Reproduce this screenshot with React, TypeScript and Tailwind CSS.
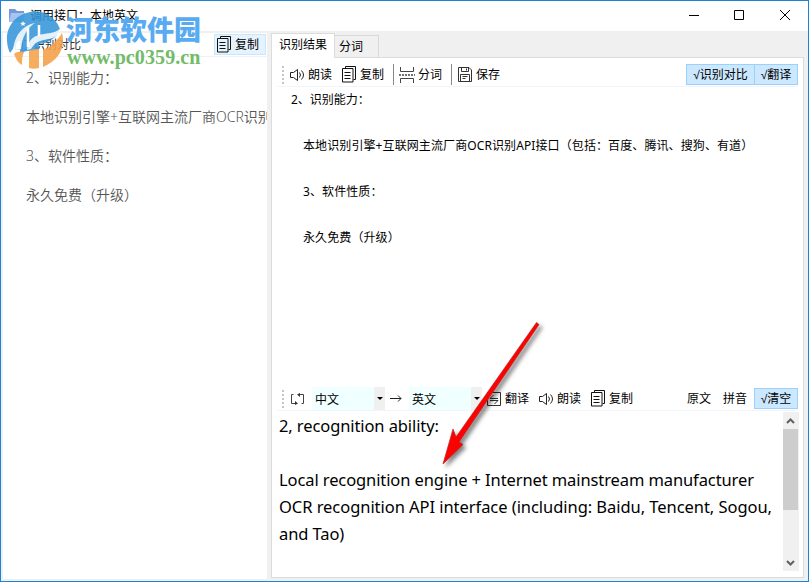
import type { ReactNode } from 'react'

const ui = "font-['Noto_Sans','Noto_Sans_CJK_SC',sans-serif]"

const sourceLines = ['2、识别能力：', '本地识别引擎+互联网主流厂商OCR识别API接口', '3、软件性质：', '永久免费（升级）']

const resultLines = [
  '本地识别引擎+互联网主流厂商OCR识别API接口（包括：百度、腾讯、搜狗、有道）',
  '3、软件性质：',
  '永久免费（升级）',
]

function CopyIcon() {
  return (
    <svg className="w-[15px] h-[17px] shrink-0" viewBox="0 0 15 17" fill="none" stroke="#111">
      <path d="M3.500 2.500V.5h10v13h-2M.5 2.500h10.500v13.500H.5zM2.500 6.500h6M2.500 9.500h6M2.500 12.500h6" />
    </svg>
  )
}

function SpeakerIcon() {
  return (
    <svg className="w-[15px] h-[14px] shrink-0" viewBox="0 0 15 14" fill="none" stroke="#222">
      <path d="M3.500 4.500h-3v5h3l4 3v-11zM9.500 4.500q2 2.500 0 5M11.500 2.500q4 4.500 0 9" />
    </svg>
  )
}

function SplitIcon() {
  return (
    <svg className="w-4 h-4 shrink-0" viewBox="0 0 16 16" fill="none" stroke="#444">
      <path d="M1.500 0v4.500h13V0M1.500 16v-4.500h13V16" />
      <path d="M0 8h16" strokeDasharray="2 1" strokeWidth="1.500" />
    </svg>
  )
}

function SaveIcon() {
  return (
    <svg className="w-[14px] h-[15px] shrink-0" viewBox="0 0 14 15" fill="none" stroke="#333">
      <path d="M.5.5h10.500l2.500 2.500v11.500H.5zM3.500.5v4h7v-4M8.500 1.500v2M2.500 14.500v-7h9v7M4.500 9.500h5M4.500 11.500h3" />
    </svg>
  )
}

function SwapIcon() {
  return (
    <svg className="w-[15px] h-3 shrink-0" viewBox="0 0 15 12" fill="none" stroke="#444">
      <path d="M3.500 1.500h-2v9h4M11.500 10.500h2v-9h-4" />
      <path d="M5 8v4l3-1.500zM10 0v4L7 1.500z" fill="#333" stroke="none" />
    </svg>
  )
}

function TranslateIcon() {
  return (
    <svg className="w-[14px] h-[14px] shrink-0" viewBox="0 0 14 14" fill="none" stroke="#333">
      <path d="M.5.5h13v13H.5zM3 6.500h8M6.500 3L3 6.500M3 8.500h8L7.500 12" />
    </svg>
  )
}

function Grip() {
  return (
    <div className="flex flex-col gap-[2px] w-[2px] shrink-0">
      {[0, 1, 2, 3, 4].map((i) => (
        <i key={i} className="block w-[2px] h-[2px] bg-[#c4c4c4]" />
      ))}
    </div>
  )
}

function Tool({ icon, label, className = '' }: { icon: ReactNode; label: string; className?: string }) {
  return (
    <button className={`flex items-center gap-1 shrink-0 whitespace-nowrap ${className}`}>
      {icon}
      <span>{label}</span>
    </button>
  )
}

function Toggle({ label, className }: { label: string; className: string }) {
  return (
    <button
      className={`h-[21px] leading-[20px] bg-[#cce8ff] border border-[#99d1ff] whitespace-nowrap font-['Liberation_Sans','Noto_Sans_CJK_SC',sans-serif] ${className}`}
    >
      √{label}
    </button>
  )
}

function LangSelect({ label }: { label: string }) {
  return (
    <div className="flex w-[73px] h-[23px] shrink-0 bg-[#f0ffff] leading-[25px]">
      <span className="flex-1 pl-[3px]">{label}</span>
      <span className="w-[11px] bg-[#f0f0f0] flex items-center justify-center">
        <i className="block border-x-[3px] border-x-transparent border-t-[3px] border-t-black" />
      </span>
    </div>
  )
}

function Watermark() {
  return (
    <div className="absolute left-[4px] top-[9px] w-[200px] h-[60px]">
      <svg className="absolute left-0 top-0 w-[60px] h-[60px]" viewBox="0 0 60 60">
        {/* upper blue half */}
        <path
          d="M5 43C-3 25 5 6 25 2c13-2 25 4 30 17-4 10-12 14-21 15v6l-12 1-7 2V29c-4 4-6 9-10 14z"
          fill="#3596d9"
          fillOpacity=".88"
        />
        {/* lower orange half */}
        <path d="M57 23c4 15-4 28-19 34V40c8-3 14-9 19-17z" fill="#f5a14a" fillOpacity=".9" />
        <path d="M24 41c4-2 7-2 10-2v19c-4 1-7 1-10 0zM9 44c3-3 7-3 10-2-2 4-2 9-2 13-4-2-6-6-8-11z" fill="#f5a44c" fillOpacity=".9" />
        {/* white swoosh and stems over both halves */}
        <path d="M8 44C8 26 18 15 30 13c-8 5-13 14-14 26-3 1-5 3-8 5z" fill="#fff" fillOpacity=".85" />
        <path d="M23 18v19M34 15v11" stroke="#fff" strokeWidth="2.500" />
        <path d="M22 40c1-11 8-15 17-16 7-1 13-2 17-6-3 10-11 11-17 12-7 1-10 4-13 9z" fill="#fff" fillOpacity=".85" />
        <path d="M18 11l.8 1.700 1.900.2-1.400 1.300.4 1.900-1.700-1-1.700 1 .4-1.900-1.400-1.300 1.900-.2z" fill="#fff" />
      </svg>
      <div className="absolute left-[61px] top-[2px] whitespace-nowrap font-['Noto_Sans_CJK_SC',sans-serif] font-black text-[27px] leading-[34px] text-[#58abf0]">
        河东软件园
      </div>
      <div className="absolute left-[62px] top-[36px] whitespace-nowrap font-['Liberation_Serif',serif] font-bold text-[20px] leading-[22px] tracking-[0.100px] text-[#73bb68]">
        www.pc0359.cn
      </div>
    </div>
  )
}

function RedArrow() {
  return (
    <svg className="absolute left-[429px] top-[309px] w-[130px] h-[170px] pointer-events-none" viewBox="0 0 130 170">
      <path
        className="drop-shadow-[3px_3px_2px_rgba(0,0,0,0.5)]"
        d="M106.500 12.500l2.500 2L29 132l4 2.500L13 154l10-35 3 8z"
        fill="#f00"
        stroke="#b22"
        strokeWidth=".7"
      />
    </svg>
  )
}

function SourcePanel() {
  return (
    <section className="w-[264px] mt-[2px] mb-[2px] shrink-0 bg-white flex flex-col overflow-hidden">
      <div className="h-6 shrink-0 flex items-center border-b border-[#f0f0f8]">
        <Tool
          className="ml-3 text-[#333]"
          icon={
            <svg className="w-[14px] h-[12px]" viewBox="0 0 14 12" fill="none" stroke="#888">
              <path d="M5 1.500H.5v9H5M9 1.500h4.500v9H9M7.500 0v12" />
            </svg>
          }
          label="识别对比"
        />
        <button className="ml-auto mr-[1px] w-[52px] h-[21px] flex items-center border border-[#c9e6fb] bg-[#e5f3ff] pl-[2px] gap-[3px]">
          <CopyIcon />
          <span>复制</span>
        </button>
      </div>
      <div className="pl-[23px] pt-[1px] text-[14px] leading-[39px] text-[#555] whitespace-nowrap font-[350]">
        {sourceLines.map((line) => (
          <p key={line}>{line}</p>
        ))}
      </div>
    </section>
  )
}

function ResultToolbar() {
  return (
    <div className="h-[29px] mx-[5px] pt-[5px] border-b border-[#f3f3fa] flex items-center">
      <div className="ml-[5px]"><Grip /></div>
      <Tool className="ml-[6px] !gap-[3px]" icon={<SpeakerIcon />} label="朗读" />
      <Tool className="ml-[10px] !gap-[3px]" icon={<CopyIcon />} label="复制" />
      <i className="ml-[9px] w-px h-[21px] bg-[#888]" />
      <Tool className="ml-[5px] !gap-[3px]" icon={<SplitIcon />} label="分词" />
      <i className="ml-[9px] w-px h-[21px] bg-[#888]" />
      <Tool className="ml-[6px]" icon={<SaveIcon />} label="保存" />
      <div className="ml-auto flex">
        <Toggle label="识别对比" className="w-[69px]" />
        <Toggle label="翻译" className="-ml-px w-[44px]" />
      </div>
    </div>
  )
}

function TranslateToolbar() {
  return (
    <div className="h-[24px] mx-[5px] border-b border-[#f3f3fa] flex items-center">
      <div className="ml-[5px]"><Grip /></div>
      <div className="ml-[6px] mr-[7px]"><SwapIcon /></div>
      <LangSelect label="中文" />
      <svg className="w-3 h-[7px] ml-[5px] mr-[7px] shrink-0" viewBox="0 0 12 7" fill="none" stroke="#222">
        <path d="M0 3.500h11M8 .5l3 3-3 3" />
      </svg>
      <LangSelect label="英文" />
      <Tool className="ml-[5px]" icon={<TranslateIcon />} label="翻译" />
      <Tool className="ml-[10px] !gap-[3px]" icon={<SpeakerIcon />} label="朗读" />
      <Tool className="ml-[10px] !gap-[3px]" icon={<CopyIcon />} label="复制" />
      <button className="ml-auto">原文</button>
      <button className="ml-3">拼音</button>
      <Toggle label="清空" className="ml-[7px] w-11" />
    </div>
  )
}

function ScrollBar() {
  return (
    <div className="w-4 h-[159px] bg-[#f0f0f0] flex flex-col items-center shrink-0">
      <svg className="w-4 h-[17px]" viewBox="0 0 16 17" fill="none" stroke="#606060" strokeWidth="2">
        <path d="M4 11l3.500-3.500L11 11" />
      </svg>
      <div className="w-[15px] h-[81px] mr-px bg-[#cdcdcd]" />
      <svg className="w-4 h-[17px] mt-auto" viewBox="0 0 16 17" fill="none" stroke="#606060" strokeWidth="2">
        <path d="M4 7l3.500 3.500L11 7" />
      </svg>
    </div>
  )
}

export default function App() {
  return (
    <div className={`relative w-[809px] h-[582px] overflow-hidden border border-[#1883d7] bg-[#f0f0f0] flex flex-col text-[12px] leading-[16px] text-black ${ui}`}>
      <header className="h-[30px] shrink-0 bg-white flex items-center">
        <svg className="ml-2 w-4 h-4" viewBox="0 0 16 16">
          <path d="M0 1h6l2 2h7v11H0z" fill="#7598d8" />
          <path d="M2 5h14l-1 9H0z" fill="#a7c3ef" />
        </svg>
        <h1 className="ml-[5px]">调用接口：本地英文</h1>
        <svg className="ml-auto mr-[17px] mb-[2px] w-[102px] h-[12px]" viewBox="0 0 102 12" fill="none" stroke="#000">
          <path d="M0 6.500h10M45.500 1.500h9v9h-9zM91 1l10 10M101 1L91 11" />
        </svg>
      </header>

      <main className="flex flex-1 min-h-0 pl-[2px]">
        <SourcePanel />
        <section className="ml-1 mr-[4px] mb-[3px] flex-1 min-w-0 flex flex-col">
          <nav className="h-[26px] shrink-0 flex items-end">
            <div className="relative z-10 h-6 w-[62px] -mb-px box-content border border-b-0 border-[#dcdcdc] bg-white text-center leading-[22px]">
              识别结果
            </div>
            <div className="h-[22px] w-[44px] border border-l-0 border-b-0 border-[#d9d9d9] pl-1 leading-[22px]">分词</div>
          </nav>
          <div className="flex-1 min-h-0 border border-[#dcdcdc] bg-white flex flex-col">
            <ResultToolbar />
            <div className="h-[300px] shrink-0 pl-[31px] leading-[46px] whitespace-nowrap">
              <p className="-ml-3 leading-[26px] mb-[10px]">2、识别能力：</p>
              {resultLines.map((line) => (
                <p key={line} className="tracking-[0.100px]">{line}</p>
              ))}
            </div>
            <TranslateToolbar />
            <div className="flex flex-1 min-h-0 pl-[7px] pr-1 pt-[1px]">
              <div className="flex-1 min-w-0 text-[16.500px] leading-[27px] tracking-[-0.100px] whitespace-nowrap">
                <p className="mb-[27px]">2, recognition ability:</p>
                <p>Local recognition engine + Internet mainstream manufacturer</p>
                <p className="tracking-[-0.050px]">OCR recognition API interface (including: Baidu, Tencent, Sogou,</p>
                <p>and Tao)</p>
              </div>
              <ScrollBar />
            </div>
          </div>
        </section>
      </main>

      <Watermark />
      <RedArrow />
    </div>
  )
}
